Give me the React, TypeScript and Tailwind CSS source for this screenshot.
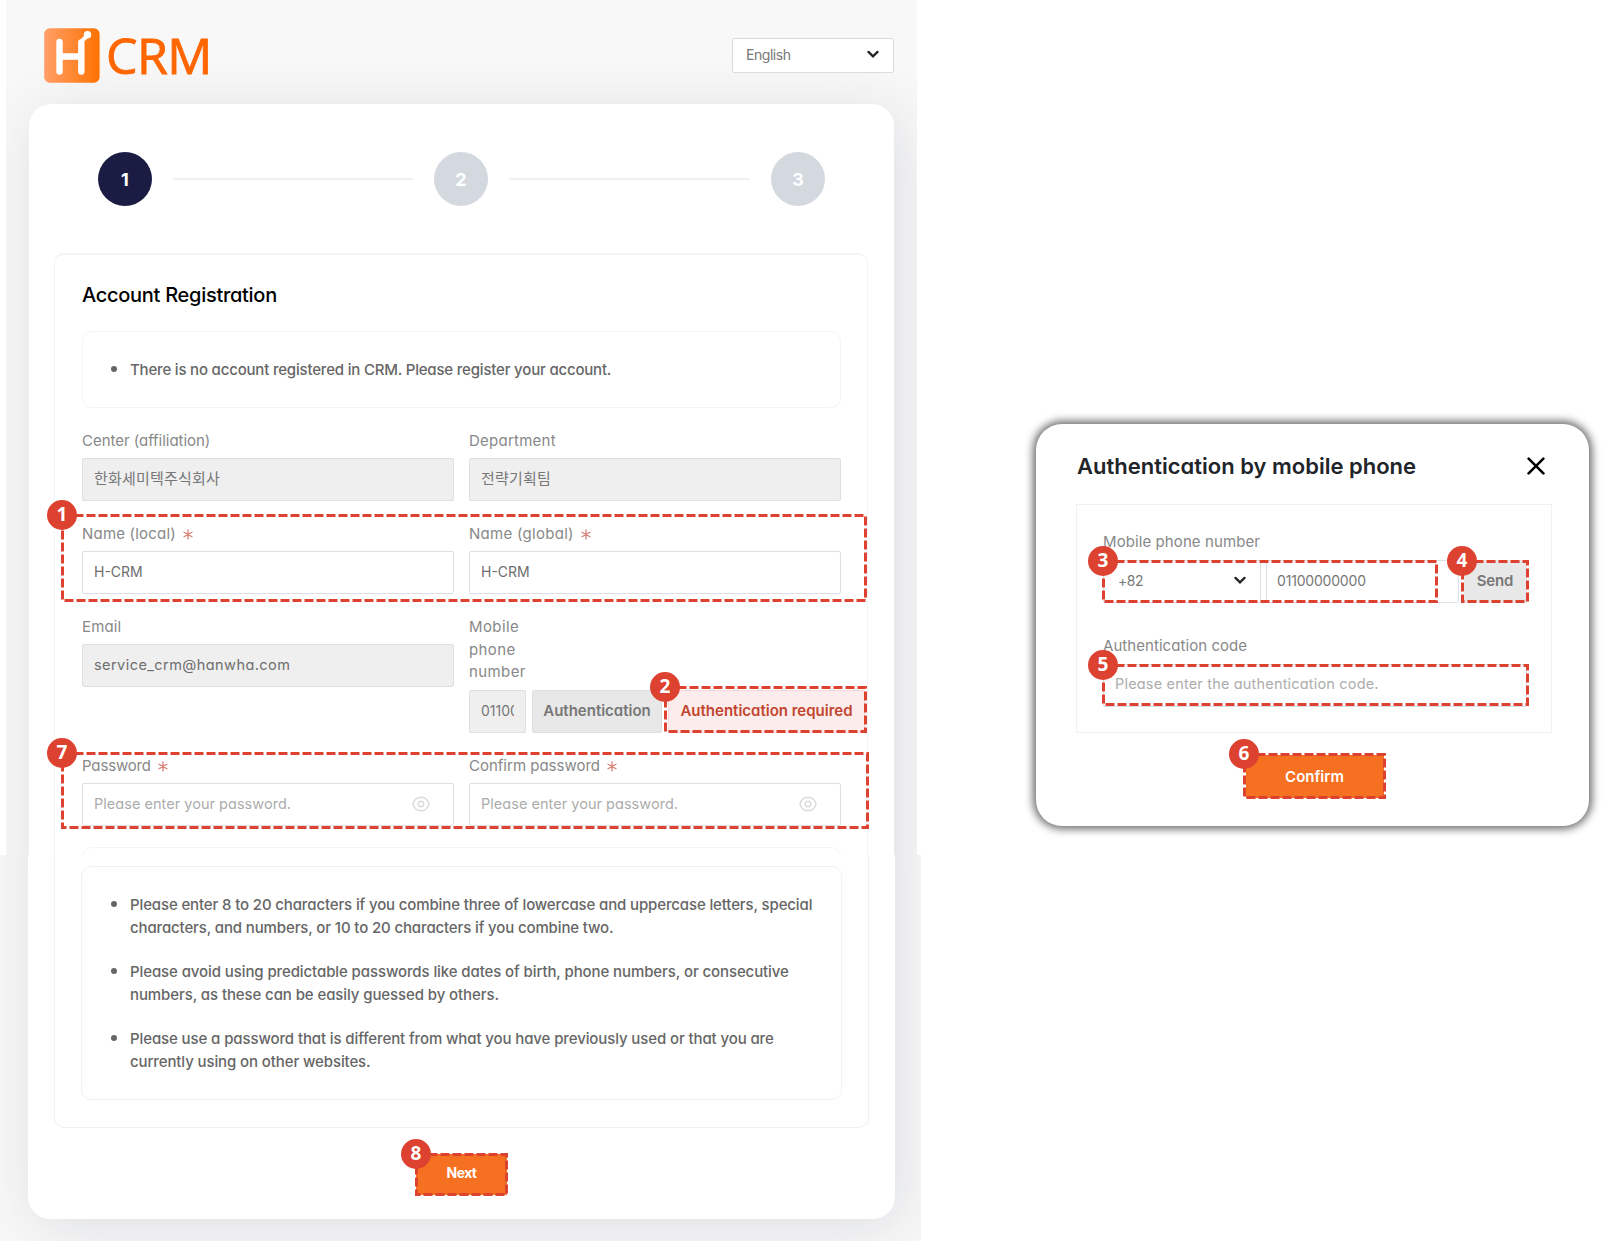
import type { ReactNode } from "react";

function Callout({ n, className }: { n: number; className: string }) {
  return (
    <div className={`pointer-events-none absolute z-10 ${className}`}>
      <svg className="absolute inset-0 size-full" fill="none">
        <rect
          x="1.5"
          y="1.5"
          className="h-[calc(100%-3px)] w-[calc(100%-3px)]"
          stroke="#dd412f"
          strokeWidth="3"
          strokeDasharray="9 3"
        />
      </svg>
      <span className="absolute -top-[14px] -left-[14px] flex size-[30px] items-center justify-center rounded-full bg-[#dd412f] pb-px font-['Noto_Sans',sans-serif] text-[19px] leading-none font-bold tracking-normal text-white">
        {n}
      </span>
    </div>
  );
}

function Chevron() {
  return (
    <svg width="12" height="9" viewBox="0 0 12 9" fill="none" stroke="#212529" strokeWidth="2.3">
      <path d="M1.500 1.900 6 6.300l4.500-4.400" strokeLinecap="round" />
    </svg>
  );
}

function EyeIcon() {
  return (
    <svg className="mt-px" width="18" height="16" viewBox="0 0 18 16" fill="none" stroke="#dadada" strokeWidth="1.4">
      <path d="M.9 8C2.3 3.6 5.4 1.2 9 1.2S15.700 3.600 17.100 8C15.700 12.400 12.600 14.800 9 14.800S2.300 12.400.9 8Z" />
      <circle cx="9" cy="8" r="2.8" />
    </svg>
  );
}

function Star() {
  return (
    <svg className="mt-px ml-[7px]" width="10" height="11" viewBox="0 0 10 11" stroke="#d98078" strokeWidth="1.3" strokeLinecap="round">
      <path d="M5 .9v9.200M1 3.200l8 4.600M9 3.200 1 7.800" />
    </svg>
  );
}

function Field({ label, required, children }: { label: ReactNode; required?: boolean; children: ReactNode }) {
  return (
    <div className="flex flex-col gap-[6px]">
      <div className="flex h-[22px] items-center text-[15px] leading-[22px] text-[#888]">
        {label}
        {required && <Star />}
      </div>
      {children}
    </div>
  );
}

function Box({ className = "", children }: { className?: string; children: ReactNode }) {
  return (
    <div className={`flex h-[43px] items-center rounded-[2px] border border-[#dce0e5] px-[11px] pb-[2px] text-[14px] text-[#777] ${className}`}>
      {children}
    </div>
  );
}

function PasswordBox() {
  return (
    <Box className="justify-between bg-white pr-[23px]">
      <span className="text-[14.5px] tracking-[0.03px] text-[#acacac]">Please enter your password.</span>
      <EyeIcon />
    </Box>
  );
}

function Logo() {
  return (
    <div className="flex items-start">
      <svg width="56" height="55" viewBox="0 0 56 55">
        <defs>
          <linearGradient id="logo" x1="0" x2="1" y1="0" y2="0">
            <stop offset="0" stopColor="#ff9f68" />
            <stop offset="1" stopColor="#ff7200" />
          </linearGradient>
        </defs>
        <rect x=".2" y=".3" width="55.400" height="54.400" rx="5.500" fill="url(#logo)" />
        <g fill="none" stroke="#fff" strokeLinecap="round" strokeLinejoin="round">
          <path d="M15.500 14v29.500M15.500 28.500H37M37.300 43.500V14.500" strokeWidth="6.400" />
          <path d="M37.300 13.500 43.500 7.500" strokeWidth="4" />
        </g>
        <circle cx="43.500" cy="6.800" r="3.700" fill="#fff" />
      </svg>
      <span className="-mt-px ml-[6px] font-['Open_Sans',sans-serif] text-[50px] leading-[56px] tracking-[-0.6px] text-[#ff6600] [-webkit-text-stroke:0.9px_#ff6600]">
        CRM
      </span>
    </div>
  );
}

function Step({ n, active }: { n: number; active?: boolean }) {
  return (
    <div
      className={`flex size-[54px] shrink-0 items-center justify-center rounded-full pt-px text-[18px] font-bold text-white ${
        active ? "bg-[#1a1c43]" : "bg-[#d4d8df]"
      }`}
    >
      {n}
    </div>
  );
}

function Rule({ className = "", children }: { className?: string; children: ReactNode }) {
  return (
    <li className="flex">
      <span className="mt-[7px] mr-[13px] size-[6px] shrink-0 rounded-full bg-[#666]" />
      <span className={`whitespace-nowrap ${className}`}>{children}</span>
    </li>
  );
}

const shadow = "shadow-[6px_8px_60px_rgba(30,40,70,0.12)]";

export default function App() {
  return (
    <main className="flex h-[1241px] w-[1605px] items-start overflow-hidden bg-white font-['Inter',sans-serif] [font-feature-settings:'cv11']">
      <div className="w-[921px]">
        <section className="ml-[6px] h-[855px] w-[911px] overflow-hidden bg-[#f8f8f8]">
          <header className="flex h-[104px] items-start justify-between pr-[23px] pl-[38px]">
            <div className="pt-[28px]">
              <Logo />
            </div>
            <div className="mt-[38px] flex h-[35px] w-[162px] items-center justify-between rounded-[2px] border border-[#d9dde3] bg-white pr-[14px] pb-[2px] pl-[13px] text-[14px] text-[#777]">
              <span className="tracking-[-0.45px]">English</span>
              <Chevron />
            </div>
          </header>
          <div className={`ml-[23px] h-[900px] w-[865px] rounded-[22px] bg-white pt-[48px] ${shadow}`}>
            <div className="flex items-center px-[69px]">
              <Step n={1} active />
              <div className="mx-[21px] h-[2px] w-[240px] bg-[#f0f0f1]" />
              <Step n={2} />
              <div className="mx-[21px] h-[2px] flex-1 bg-[#f0f0f1]" />
              <Step n={3} />
            </div>
            <div className="mt-[47px] ml-[25px] h-[800px] w-[814px] rounded-[10px] border border-t-2 border-[#f4f4f4] px-[27px] pt-[25px]">
              <h1 className="text-[20px] leading-[31px] font-medium tracking-[-0.28px] text-black">Account Registration</h1>
              <ul className="mt-[20px] flex h-[77px] w-[759px] items-center rounded-[10px] border-[1.5px] border-[#f4f4f4] pl-[28px] text-[15px] leading-[22px] font-medium text-[#666]">
                <Rule className="tracking-[-0.19px]">There is no account registered in CRM. Please register your account.</Rule>
              </ul>
              <div className="mt-[22px] grid w-[759px] grid-cols-1 gap-[22px]">
                <div className="grid grid-cols-2 gap-[15px]">
                  <Field label={<span className="tracking-[-0.03px]">Center (affiliation)</span>}>
                    <Box className="bg-[#efefef] font-['Inter','Noto_Sans_CJK_KR',sans-serif]">
                      <span className="pt-px text-[15px] tracking-[0.2px]">한화세미텍주식회사</span>
                    </Box>
                  </Field>
                  <Field label={<span className="tracking-[0.25px]">Department</span>}>
                    <Box className="bg-[#efefef] font-['Inter','Noto_Sans_CJK_KR',sans-serif]">
                      <span className="pt-px text-[15px] tracking-[0.2px]">전략기획팀</span>
                    </Box>
                  </Field>
                </div>
                <div className="relative grid grid-cols-2 gap-[15px]">
                  <Field label={<span className="tracking-[0.2px]">Name (local)</span>} required>
                    <Box className="bg-white"><span className="text-[#6e6e6e]">H-CRM</span></Box>
                  </Field>
                  <Field label={<span className="tracking-[0.28px]">Name (global)</span>} required>
                    <Box className="bg-white"><span className="text-[#6e6e6e]">H-CRM</span></Box>
                  </Field>
                  <Callout n={1} className="-top-[9px] -left-[21px] h-[88px] w-[806px]" />
                </div>
                <div className="grid grid-cols-2 gap-[15px]">
                  <Field label={<span className="tracking-[0.15px]">Email</span>}>
                    <Box className="bg-[#efefef]">
                      <span className="text-[14.5px] tracking-[0.44px] text-[#6e6e6e]">service_crm@hanwha.com</span>
                    </Box>
                  </Field>
                  <div>
                    <div className="h-[68px] w-[57px] text-[15px] leading-[22.7px] tracking-[0.4px] text-[#888]">
                      Mobile
                      <br />
                      phone
                      <br />
                      number
                    </div>
                    <div className="mt-[6px] flex w-[397px] gap-[6px]">
                      <Box className="w-[57px] bg-[#efefef]">
                        <span className="overflow-hidden whitespace-nowrap">01100000000</span>
                      </Box>
                      <div className="flex h-[43px] w-[130px] items-center justify-center rounded-[2px] border border-[#dce0e5] bg-[#e8e8e8] text-[15px] font-semibold text-[#777]">
                        Authentication
                      </div>
                      <div className="relative flex h-[43px] w-[197px] items-center justify-center rounded-[2px] border border-[#f8d7da] bg-[#fdecec] text-[15px] font-semibold text-[#c2452f]">
                        Authentication required
                        <Callout n={2} className="-top-[5px] -left-[5px] h-[47px] w-[203px]" />
                      </div>
                    </div>
                  </div>
                </div>
                <div className="relative grid grid-cols-2 gap-[15px]">
                  <Field label={<span className="tracking-[-0.15px]">Password</span>} required>
                    <PasswordBox />
                  </Field>
                  <Field label="Confirm password" required>
                    <PasswordBox />
                  </Field>
                  <Callout n={7} className="-top-[3px] -left-[21px] h-[77px] w-[808px]" />
                </div>
                <div className="-mt-px h-[60px] rounded-[10px] border-[1.5px] border-[#f4f4f4]" />
              </div>
            </div>
          </div>
        </section>

        <section className="h-[386px] w-[921px] overflow-hidden bg-[#f8f8f8]">
          <div className={`-mt-[60px] ml-[28px] h-[424px] w-[867px] rounded-[22px] bg-white pt-[60px] ${shadow}`}>
            <div className="ml-[26px] h-[273px] w-[815px] rounded-b-[10px] border border-t-0 border-[#f1f1f1] pt-[11px] pl-[26px]">
              <ul className="flex h-[234px] w-[761px] flex-col gap-[22px] rounded-[10px] border border-[#f1f1f1] pt-[27px] pl-[29px] text-[15px] leading-[22.6px] font-medium text-[#666]">
                <Rule className="tracking-[-0.135px]">
                  Please enter 8 to 20 characters if you combine three of lowercase and uppercase letters, special
                  <br />
                  characters, and numbers, or 10 to 20 characters if you combine two.
                </Rule>
                <Rule className="tracking-[-0.1px]">
                  Please avoid using predictable passwords like dates of birth, phone numbers, or consecutive
                  <br />
                  numbers, as these can be easily guessed by others.
                </Rule>
                <Rule className="tracking-[-0.11px]">
                  Please use a password that is different from what you have previously used or that you are
                  <br />
                  currently using on other websites.
                </Rule>
              </ul>
            </div>
            <button className="relative mt-[26px] ml-[388px] flex h-[41px] w-[91px] items-center justify-center bg-[#f57121] pb-[4px] text-[14px] font-bold tracking-[-0.6px] text-white">
              Next
              <Callout n={8} className="-top-px -left-px h-[43px] w-[93px]" />
            </button>
          </div>
        </section>
      </div>

      <aside className="mt-[424px] ml-[115px] h-[402px] w-[553px] rounded-[26px] bg-white shadow-[0_0_9px_3px_#6b6b6b]">
        <div className="flex items-center justify-between pt-[25px] pr-[44px] pl-[41px]">
          <h2 className="text-[22px] leading-[34px] font-semibold text-[#212529]">Authentication by mobile phone</h2>
          <svg width="18" height="18" viewBox="0 0 18 18" stroke="#000" strokeWidth="2.6" strokeLinecap="round">
            <path d="M1.600 1.600 16.400 16.400M16.400 1.600 1.600 16.400" />
          </svg>
        </div>
        <div className="mt-[21px] ml-[40px] h-[229px] w-[476px] border border-[#f1f1f1] pt-[26px] pl-[26px]">
          <div className="h-[22px] text-[15px] leading-[22px] tracking-[0.09px] text-[#888]">Mobile phone number</div>
          <div className="relative mt-[7px] flex">
            <Box className="w-[158px] justify-between bg-white pr-[14px] pl-[14px]">
              <span className="tracking-[-0.4px]">+82</span>
              <Chevron />
            </Box>
            <Box className="ml-[5px] w-[193px] bg-white pl-[10px] tracking-[-0.19px]">01100000000</Box>
            <div className="relative ml-[5px] flex h-[43px] w-[63px] items-center justify-center bg-[#e8e8e8] pr-px text-[15px] font-semibold tracking-[-0.2px] text-[#777]">
              Send
              <Callout n={4} className="top-0 -left-[3px] h-[43px] w-[68px]" />
            </div>
            <Callout n={3} className="top-0 -left-px h-[43px] w-[336px]" />
          </div>
          <div className="mt-[32px] h-[22px] text-[15px] leading-[22px] tracking-[0.06px] text-[#888]">Authentication code</div>
          <div className="relative mt-[7px] w-[424px]">
            <Box className="h-[42px] bg-white pb-[3px] pl-[11px]">
              <span className="text-[14.5px] tracking-[0.18px] text-[#acacac]">Please enter the authentication code.</span>
            </Box>
            <Callout n={5} className="top-0 -left-px h-[42px] w-[427px]" />
          </div>
        </div>
        <button className="relative mt-[22px] ml-[210px] flex h-[43px] w-[138px] items-center justify-center bg-[#f57121] pt-px pr-px text-[15px] font-semibold text-white">
          Confirm
          <Callout n={6} className="-top-[2px] -left-[3px] h-[46px] w-[143px]" />
        </button>
      </aside>
    </main>
  );
}
